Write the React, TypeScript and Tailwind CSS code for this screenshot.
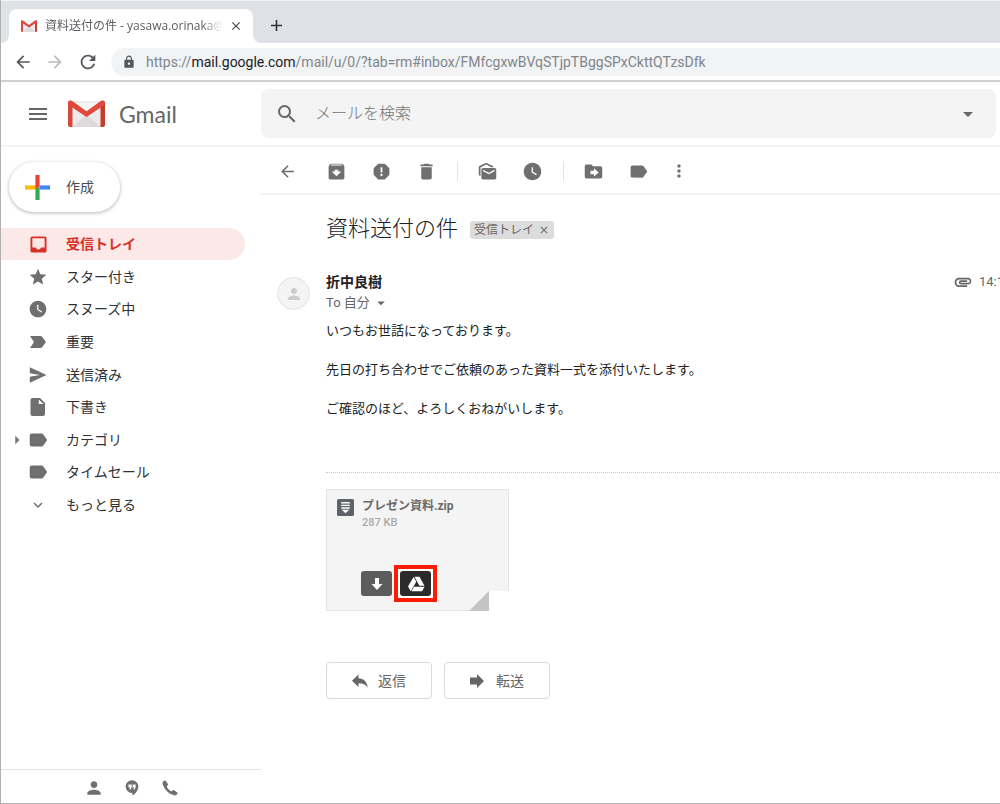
import type { ReactNode } from "react";
import type { IconType } from "react-icons";
import {
  MdAdd,
  MdArchive,
  MdArrowBack,
  MdArrowDropDown,
  MdArrowForward,
  MdArrowRight,
  MdAttachment,
  MdClose,
  MdDelete,
  MdExpandMore,
  MdLabel,
  MdLock,
  MdMarkAsUnread,
  MdMenu,
  MdMoreVert,
  MdPerson,
  MdRefresh,
  MdReport,
  MdSearch,
  MdStar,
  MdWatchLater,
} from "react-icons/md";

type IconProps = { className?: string };

type NavItem = {
  label: string;
  icon: ReactNode;
  active?: boolean;
  expandable?: boolean;
};

function GmailLogo({ className }: IconProps) {
  return (
    <svg viewBox="0 0 37 27" className={className} aria-hidden="true">
      <path d="M2 1h33v26H2z" fill="#eceaea" />
      <path d="M4 27 18.500 15 33 27z" fill="#dcdada" />
      <path d="M5 3h27L18.500 13z" fill="#f7f6f6" />
      <path d="M0 3a2.500 2.500 0 0 1 2.500-2.500L4.500 5v22H2a2 2 0 0 1-2-2z" fill="#d5493c" />
      <path d="M37 3a2.500 2.500 0 0 0-2.500-2.500L32.500 5v22H35a2 2 0 0 0 2-2z" fill="#c63a30" />
      <path d="M0 3C0 .6 2.600-.3 4.300 1L18.500 11.300 32.700 1C34.400-.3 37 .6 37 3c0 1.200-.5 2-1.300 2.600L18.500 17 1.300 5.600C.5 5 0 4.200 0 3z" fill="#e04a3d" />
    </svg>
  );
}

function InboxIcon({ className }: IconProps) {
  return (
    <svg viewBox="0 0 18 18" className={className} fill="currentColor" fillRule="evenodd" aria-hidden="true">
      <path d="M2.500.5h13a2 2 0 0 1 2 2v13a2 2 0 0 1-2 2h-13a2 2 0 0 1-2-2v-13a2 2 0 0 1 2-2zm0 2v9.800h3.700c.4 1.300 1.500 2 2.800 2s2.400-.7 2.800-2h3.700V2.500z" />
    </svg>
  );
}

function ImportantIcon({ className }: IconProps) {
  return (
    <svg viewBox="0 0 18 18" className={className} fill="currentColor" aria-hidden="true">
      <path d="M1 3h10.500c.7 0 1.200.3 1.600.8L17 9l-3.900 5.200c-.4.500-.9.8-1.600.8H1l4-6z" />
    </svg>
  );
}

function SendIcon({ className }: IconProps) {
  return (
    <svg viewBox="0 0 18 18" className={className} fill="currentColor" fillRule="evenodd" aria-hidden="true">
      <path d="M.8 1.200 17.500 9 .8 16.800V10.700L11 9 .8 7.300z" />
    </svg>
  );
}

function DraftIcon({ className }: IconProps) {
  return (
    <svg viewBox="0 0 18 18" className={className} fill="currentColor" fillRule="evenodd" aria-hidden="true">
      <path d="M3.500 0H11l5 5v11a2 2 0 0 1-2 2H3.500a2 2 0 0 1-2-2V2a2 2 0 0 1 2-2zM9.800 1.500V6h4.700z" />
    </svg>
  );
}

function MoveIcon({ className }: IconProps) {
  return (
    <svg viewBox="0 0 24 24" className={className} fill="currentColor" fillRule="evenodd" aria-hidden="true">
      <path d="M4 4h5.500l2 2H20a2 2 0 0 1 2 2v10a2 2 0 0 1-2 2H4a2 2 0 0 1-2-2V6a2 2 0 0 1 2-2zm8.500 4.200v2.800H8.500v4h4v2.800l5.500-4.800z" />
    </svg>
  );
}

function HangoutsIcon({ className }: IconProps) {
  return (
    <svg viewBox="0 0 18 20" className={className} fill="currentColor" fillRule="evenodd" aria-hidden="true">
      <path d="M9 0a8.200 8.200 0 0 1 8.200 8.200c0 5-3.600 9.300-7.700 11.600v-3.400H9A8.200 8.200 0 0 1 9 0zM4.500 5.500v4h2.300L5.500 12h1.700l1.300-2.500v-4zm5.200 0v4H12L10.700 12h1.700l1.300-2.500v-4z" />
    </svg>
  );
}

function PhoneIcon({ className }: IconProps) {
  return (
    <svg viewBox="0 0 18 18" className={className} fill="currentColor" aria-hidden="true">
      <path d="M3.900.8 6.700 4.500c.3.400.2.900-.1 1.300L5.200 7.200c1.300 2.500 3 4.300 5.500 5.600l1.600-1.300c.4-.3.900-.3 1.300 0l3.600 2.700c.4.300.5.900.2 1.300-1.200 1.700-2.800 2.200-4.700 1.500C6.700 14.800 3 11 .9 5.300.3 3.400.9 1.800 2.600.6c.4-.3 1-.2 1.300.2z" />
    </svg>
  );
}

function DriveIcon({ className }: IconProps) {
  return (
    <svg viewBox="0 0 24 22" className={className} fill="currentColor" aria-hidden="true">
      <path d="M8.700 1.500 1 14.500l3.800 6.300 7.600-13z" />
      <path d="M9.900 1h6.800l7 12.300h-7z" />
      <path d="M9.300 14.700h14.500L20.300 21H5.700z" />
    </svg>
  );
}

function ZipIcon({ className }: IconProps) {
  return (
    <svg viewBox="0 0 16 16" className={className} aria-hidden="true">
      <rect width="16" height="16" rx="1.500" fill="#5f6368" />
      <path d="M4 3.500h8M4 6h8M4 8.500h8" stroke="#fff" strokeWidth="1.300" />
      <path d="M4.500 10h7L8 13.300z" fill="#fff" />
    </svg>
  );
}

function DownloadArrow({ className }: IconProps) {
  return (
    <svg viewBox="0 0 12 12" className={className} fill="currentColor" aria-hidden="true">
      <path d="M4 0h4v6h3.500L6 12 .5 6H4z" />
    </svg>
  );
}

function ReplyIcon({ className }: IconProps) {
  return (
    <svg viewBox="0 0 16 14" className={className} fill="currentColor" aria-hidden="true">
      <path d="M6.500.5v3.800c5.200.3 8.500 3.500 9.300 9.200-2.300-2.900-5-4.200-9.300-4.200v3.700L0 6.800z" />
    </svg>
  );
}

function ForwardIcon({ className }: IconProps) {
  return (
    <svg viewBox="0 0 14 14" className={className} fill="currentColor" aria-hidden="true">
      <path d="M0 3.500h7V0l7 7-7 7v-3.500H0z" />
    </svg>
  );
}

function ComposePlus({ className }: IconProps) {
  return (
    <svg viewBox="0 0 24 24" className={className} aria-hidden="true">
      <path d="M10 0h4v12h-4z" fill="#ea4335" />
      <path d="M10 12h4v12h-4z" fill="#34a853" />
      <path d="M0 10h10v4H0z" fill="#fbbc05" />
      <path d="M14 10h10v4H14z" fill="#4285f4" />
      <path d="M10 14v-4h4z" fill="#ea4335" />
    </svg>
  );
}

const navItems: NavItem[] = [
  { label: "受信トレイ", icon: <InboxIcon className="size-[17px]" />, active: true },
  { label: "スター付き", icon: <MdStar className="size-5" /> },
  { label: "スヌーズ中", icon: <MdWatchLater className="size-5" /> },
  { label: "重要", icon: <ImportantIcon className="size-[18px]" /> },
  { label: "送信済み", icon: <SendIcon className="size-[18px]" /> },
  { label: "下書き", icon: <DraftIcon className="size-[18px]" /> },
  { label: "カテゴリ", icon: <MdLabel className="size-[22px]" />, expandable: true },
  { label: "タイムセール", icon: <MdLabel className="size-[22px]" /> },
  { label: "もっと見る", icon: <MdExpandMore className="size-[18px]" /> },
];

const toolGroups: { label: string; icon: IconType | typeof MoveIcon }[][] = [
  [
    { label: "アーカイブ", icon: MdArchive },
    { label: "迷惑メールを報告", icon: MdReport },
    { label: "削除", icon: MdDelete },
  ],
  [
    { label: "未読にする", icon: MdMarkAsUnread },
    { label: "スヌーズ", icon: MdWatchLater },
  ],
  [
    { label: "移動", icon: MoveIcon },
    { label: "ラベル", icon: MdLabel },
  ],
];

function TabBar() {
  return (
    <div className="flex h-[43px] items-end border-t border-gray-100 bg-[#dee1e6] pl-2">
      <div className="relative flex h-[34px] w-[244px] items-center rounded-t-lg bg-white pr-2.5 pl-3">
        <svg viewBox="0 0 8 8" className="absolute bottom-0 -left-2 size-2" fill="#fff" aria-hidden="true">
          <path d="M8 0v8H0a8 8 0 0 0 8-8z" />
        </svg>
        <svg viewBox="0 0 8 8" className="absolute -right-2 bottom-0 size-2" fill="#fff" aria-hidden="true">
          <path d="M0 0v8h8a8 8 0 0 1-8-8z" />
        </svg>
        <GmailLogo className="h-3 w-4 shrink-0" />
        <span className="ml-2 flex-1 overflow-hidden mask-r-from-88% mask-r-to-100% font-['Open_Sans','Noto_Sans_CJK_JP',sans-serif] text-xs whitespace-nowrap text-[#5a5d61]">
          資料送付の件 - yasawa.orinaka@
        </span>
        <button type="button" aria-label="タブを閉じる" className="ml-1.5 text-[#45484c]">
          <MdClose className="size-[14px]" />
        </button>
      </div>
      <button type="button" aria-label="新しいタブ" className="mb-2 ml-3.5 text-[#303236]">
        <MdAdd className="size-[19px]" />
      </button>
    </div>
  );
}

function AddressBar() {
  return (
    <div className="flex h-[39px] items-center border-b-2 border-[#cfcfcf] pl-3 text-[#55585c]">
      <button type="button" aria-label="戻る">
        <MdArrowBack className="size-5" />
      </button>
      <button type="button" aria-label="進む" className="ml-3 text-[#b9bbbd]">
        <MdArrowForward className="size-5" />
      </button>
      <button type="button" aria-label="再読み込み" className="ml-3">
        <MdRefresh className="size-[22px]" />
      </button>
      <div className="ml-3 flex h-7 flex-1 items-center rounded-l-full bg-[#f1f3f4] pl-[11px]">
        <MdLock className="size-[14px]" />
        <div
          role="textbox"
          aria-label="アドレス"
          className="ml-2.5 text-sm whitespace-nowrap text-[#80868b]"
        >
          https://<span className="text-[#202124]">mail.google.com</span>
          /mail/u/0/?tab=rm#inbox/FMfcgxwBVqSTjpTBggSPxCkttQTzsDfk
        </div>
      </div>
    </div>
  );
}

function Header() {
  return (
    <header className="flex h-[65px] items-center border-b-2 border-[#f4f4f4] pr-1 text-[#666]">
      <div className="flex w-[260px] shrink-0 items-center pl-[25px]">
        <button type="button" aria-label="メインメニュー">
          <MdMenu className="size-6" />
        </button>
        <a href="#inbox" className="ml-[18px] flex items-center gap-3.5">
          <GmailLogo className="h-[27px] w-[37px]" />
          <span className="font-[Lato,sans-serif] text-[23px] leading-7">Gmail</span>
        </a>
      </div>
      <form className="flex h-[49px] flex-1 items-center rounded-lg bg-[#f4f4f4] pr-4 pl-3.5">
        <button type="button" aria-label="検索">
          <MdSearch className="size-6" />
        </button>
        <input
          type="text"
          aria-label="メールを検索"
          placeholder="メールを検索"
          className="ml-4 min-w-0 flex-1 bg-transparent text-base font-light outline-none placeholder:text-[#757575]"
        />
        <button type="button" aria-label="検索オプション">
          <MdArrowDropDown className="size-6" />
        </button>
      </form>
    </header>
  );
}

function Sidebar() {
  return (
    <aside className="flex w-[260px] shrink-0 flex-col">
      <button
        type="button"
        className="mt-[15px] ml-2 flex h-[50px] w-[111px] items-center gap-4 rounded-full bg-white pl-4 text-sm text-[#4a4d50] shadow-[0_1px_3px_1px_rgba(60,64,67,0.25)]"
      >
        <ComposePlus className="size-[25px]" />
        作成
      </button>
      <nav className="mt-4 flex h-[293px] flex-col justify-between">
        {navItems.map((item) => (
          <a
            key={item.label}
            href="#inbox"
            className={`relative mr-4 flex h-8 items-center gap-4 rounded-r-full pl-[25px] text-sm ${
              item.active ? "bg-[#fce8e6] font-bold text-[#d93025]" : "text-[#303134]"
            }`}
          >
            {item.expandable && <MdArrowRight className="absolute left-1.5 size-5 text-[#757575]" />}
            <span className={`flex w-6 justify-center ${item.active ? "" : "text-[#6f6f6f]"}`}>{item.icon}</span>
            {item.label}
          </a>
        ))}
      </nav>
      <footer className="mt-auto flex h-[34px] items-center gap-[18px] border-t border-[#e4e4e4] pt-0.5 pl-[83px] text-[#6f6f6f]">
        <button type="button" aria-label="連絡先">
          <MdPerson className="size-5" />
        </button>
        <button type="button" aria-label="ハングアウト" className="flex w-5 justify-center">
          <HangoutsIcon className="h-4 w-[14px]" />
        </button>
        <button type="button" aria-label="電話" className="flex w-5 justify-center">
          <PhoneIcon className="size-4" />
        </button>
      </footer>
    </aside>
  );
}

function Toolbar() {
  return (
    <div className="flex h-12 items-center border-b-2 border-[#f4f4f4] pt-0.5 text-[#6f6f6f]">
      <button type="button" aria-label="受信トレイに戻る" className="flex w-[53px] justify-center">
        <MdArrowBack className="size-[19px]" />
      </button>
      {toolGroups.map((group, i) => (
        <div key={i} className="flex items-center">
          {i > 0 && (
            <div className="flex w-4 justify-center">
              <span className="h-5 w-px bg-[#e4e4e4]" />
            </div>
          )}
          {group.map(({ label, icon: Icon }) => (
            <button key={label} type="button" aria-label={label} className="flex w-[45px] justify-center">
              <Icon className="size-[21px]" />
            </button>
          ))}
        </div>
      ))}
      <button type="button" aria-label="その他" className="flex w-9 justify-center">
        <MdMoreVert className="size-5" />
      </button>
    </div>
  );
}

function Attachment() {
  return (
    <div className="relative mt-4 h-[122px] w-[183px] border border-[#e4e4e4] bg-[#f4f4f4] pt-[7px] pl-2.5">
      <div className="flex gap-2">
        <ZipIcon className="mt-0.5 size-[17px]" />
        <div className="text-xs">
          <p className="leading-[18px] font-bold text-[#6a6a6a]">プレゼン資料.zip</p>
          <p className="text-[11px] leading-4 font-medium text-[#aaa]">287 KB</p>
        </div>
      </div>
      <div className="mt-[34px] ml-6 flex items-center gap-0.5 text-white">
        <button
          type="button"
          aria-label="ダウンロード"
          className="flex h-[25px] w-[31px] items-center justify-center rounded-[3px] bg-[#5c5c5c]"
        >
          <DownloadArrow className="size-3" />
        </button>
        <div className="border-4 border-[#fb1c04] bg-white p-0.5">
          <button
            type="button"
            aria-label="ドライブに保存"
            className="flex h-[25px] w-[31px] items-center justify-center rounded-[3px] bg-[#2b2b2b]"
          >
            <DriveIcon className="h-4 w-[18px]" />
          </button>
        </div>
      </div>
      {/* folded corner */}
      <svg viewBox="0 0 40 20" className="absolute -right-px -bottom-px h-5 w-10" aria-hidden="true">
        <path d="M20 0h20v20H20z" fill="#fff" />
        <path d="M0 20 20 0v20z" fill="#c4c4c4" />
      </svg>
    </div>
  );
}

function Message() {
  return (
    <article className="pl-4">
      <div className="mt-5 flex h-7 items-center gap-3 pl-[49px]">
        <h1 className="text-[22px] leading-7 font-light text-[#202124]">資料送付の件</h1>
        <span className="mt-0.5 flex h-[18px] items-center gap-1 rounded-[3px] bg-[#dcdcdc] px-1 text-xs text-[#666]">
          受信トレイ
          <button type="button" aria-label="ラベルを外す">
            <MdClose className="size-3" />
          </button>
        </span>
      </div>
      <div className="mt-[29px] flex gap-4">
        <div className="mt-[5px] flex size-[33px] shrink-0 items-center justify-center rounded-full border border-[#e4e4e4] bg-[#f4f4f4] text-[#ccc]">
          <MdPerson className="size-[18px]" />
        </div>
        <div className="min-w-0 flex-1">
          <div className="flex justify-between text-sm leading-5">
            <span className="font-bold text-[#202124]">折中良樹</span>
            <span className="flex w-[47px] items-center gap-1.5 overflow-hidden text-[13px] whitespace-nowrap text-[#666]">
              <MdAttachment className="size-5 shrink-0" />
              14:1
            </span>
          </div>
          <button type="button" className="flex h-[22px] items-center gap-0.5 text-[13px] text-[#666]">
            To 自分
            <MdArrowDropDown className="size-[18px]" />
          </button>
          <div className="mt-[7px] space-y-5 text-[13px] leading-[19px] text-[#222]">
            <p>いつもお世話になっております。</p>
            <p>先日の打ち合わせでご依頼のあった資料一式を添付いたします。</p>
            <p>ご確認のほど、よろしくおねがいします。</p>
          </div>
          <hr className="mt-[54px] border-dotted border-[#ccc]" />
          <Attachment />
          <div className="mt-[51px] flex gap-3 pb-8 text-sm text-[#666]">
            <button
              type="button"
              className="flex h-[37px] w-[106px] items-center justify-center gap-2.5 rounded border border-[#dadada]"
            >
              <ReplyIcon className="h-3.5 w-4" />
              返信
            </button>
            <button
              type="button"
              className="flex h-[37px] w-[106px] items-center justify-center gap-3 rounded border border-[#dadada]"
            >
              <ForwardIcon className="size-3.5" />
              転送
            </button>
          </div>
        </div>
      </div>
    </article>
  );
}

export default function App() {
  return (
    <div className="flex min-h-screen flex-col border-b border-l border-[#b0b0b0] bg-white font-[Roboto,'Noto_Sans_CJK_JP',sans-serif]">
      <TabBar />
      <AddressBar />
      <Header />
      <div className="flex flex-1">
        <Sidebar />
        <main className="min-w-0 flex-1">
          <Toolbar />
          <Message />
        </main>
      </div>
    </div>
  );
}
